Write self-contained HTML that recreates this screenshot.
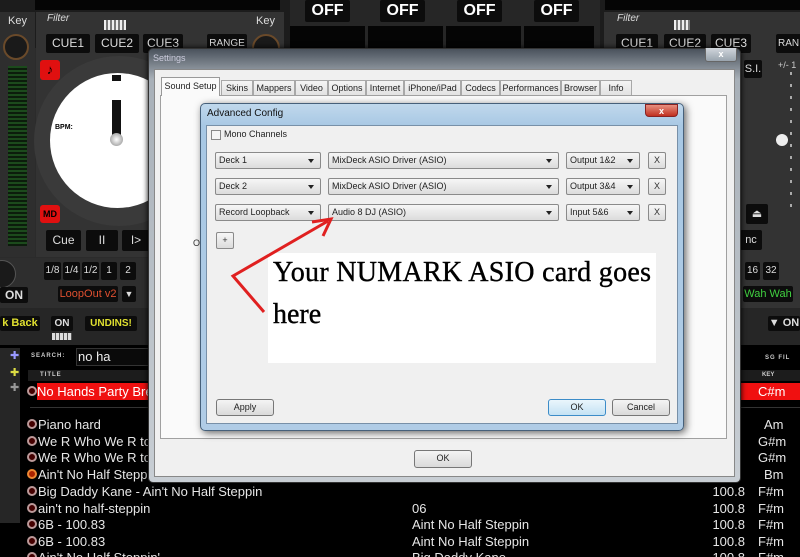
<!DOCTYPE html>
<html><head><meta charset="utf-8"><style>
*{margin:0;padding:0;box-sizing:border-box}
html,body{width:800px;height:557px;overflow:hidden}
body{background:#2b2b2b;font-family:"Liberation Sans",Arial,sans-serif;position:relative}
.a{position:absolute}
.btn{position:absolute;background:#0c0c0c;color:#ddd;font-size:11px;text-align:center;border-radius:2px}
.w{color:#fff}
.row{position:absolute;left:0;width:800px;height:17px;color:#e6e6e6;font-size:13px;line-height:17px}
.row .ic{position:absolute;left:27px;top:3px;width:10px;height:10px;border-radius:50%;border:2px solid #b99;background:#400}
.row .t{position:absolute;left:38px}
.row .al{position:absolute;left:412px}
.row .b{position:absolute;right:55px}
.row .k{position:absolute;left:758px}
.cb{position:absolute;height:17px;border:1px solid #8a8a8a;border-radius:2px;background:linear-gradient(#f6f6f6,#dcdcdc);font-size:9px;line-height:15px;padding-left:3px;color:#222}
.cb:after{content:"";position:absolute;right:6px;top:6px;border:3px solid transparent;border-top:4px solid #222}
.xb{position:absolute;width:18px;height:17px;border:1px solid #8a8a8a;border-radius:2px;background:linear-gradient(#f6f6f6,#dcdcdc);font-size:9px;text-align:center;line-height:15px;color:#333}
.pb{position:absolute;height:17px;border:1px solid #777;border-radius:3px;background:linear-gradient(#f4f4f4,#dadada);font-size:9px;text-align:center;line-height:15px;color:#222}
.tab{position:absolute;top:80px;height:15px;border:1px solid #a8a8a8;border-bottom:none;background:linear-gradient(#f4f4f4,#e2e2e2);font-size:9px;line-height:14px;text-align:center;color:#222}
</style></head><body>
<div class="a" style="left:0;top:0;width:800px;height:48px;background:#1c1c1c"></div>
<div class="a" style="left:290px;top:0;width:310px;height:48px;background:#262626"></div>
<div class="btn w" style="left:305px;top:0;width:45px;height:22px;font-size:16px;font-weight:bold;line-height:22px">OFF</div>
<div class="btn w" style="left:380px;top:0;width:45px;height:22px;font-size:16px;font-weight:bold;line-height:22px">OFF</div>
<div class="btn w" style="left:457px;top:0;width:45px;height:22px;font-size:16px;font-weight:bold;line-height:22px">OFF</div>
<div class="btn w" style="left:534px;top:0;width:45px;height:22px;font-size:16px;font-weight:bold;line-height:22px">OFF</div>
<div class="a" style="left:290px;top:26px;width:75px;height:22px;background:#050505"></div>
<div class="a" style="left:368px;top:26px;width:75px;height:22px;background:#050505"></div>
<div class="a" style="left:446px;top:26px;width:75px;height:22px;background:#050505"></div>
<div class="a" style="left:524px;top:26px;width:70px;height:22px;background:#050505"></div>
<div class="a" style="left:35px;top:0;width:245px;height:10px;background:#050505"></div>
<div class="a" style="left:605px;top:0;width:195px;height:10px;background:#050505"></div>
<div class="a" style="left:0;top:12px;width:35px;height:245px;background:#2e2e2e"></div>
<div class="a" style="left:8px;top:15px;color:#ddd;font-size:11px">Key</div>
<div class="a" style="left:3px;top:34px;width:26px;height:26px;border-radius:50%;background:#1a1a1a;border:2px solid #6a4a2a"></div>
<div class="a" style="left:8px;top:66px;width:19px;height:180px;background:repeating-linear-gradient(#1c4a1c 0 2px,#0c1c0c 2px 4px)"></div>
<div class="a" style="left:36px;top:12px;width:248px;height:245px;background:#333"></div>
<div class="a" style="left:47px;top:13px;color:#ddd;font-size:10px;font-style:italic">Filter</div>
<div class="a" style="left:104px;top:20px;width:22px;height:10px;background:repeating-linear-gradient(90deg,#eee 0 2px,#777 2px 4px)"></div>
<div class="btn" style="left:46px;top:34px;width:44px;height:19px;font-size:12px;line-height:19px">CUE1</div>
<div class="btn" style="left:95px;top:34px;width:44px;height:19px;font-size:12px;line-height:19px">CUE2</div>
<div class="btn" style="left:143px;top:34px;width:40px;height:19px;font-size:12px;line-height:19px">CUE3</div>
<div class="btn" style="left:207px;top:34px;width:40px;height:19px;font-size:10px;line-height:19px">RANGE</div>
<div class="a" style="left:256px;top:15px;color:#ddd;font-size:11px">Key</div>
<div class="a" style="left:252px;top:34px;width:28px;height:28px;border-radius:50%;background:#1a1a1a;border:2px solid #6a4a2a"></div>
<div class="a" style="left:34px;top:56px;width:170px;height:170px;border-radius:50%;background:#3a3a3a"></div>
<div class="a" style="left:50px;top:73px;width:135px;height:135px;border-radius:50%;background:#fff"></div>
<div class="a" style="left:40px;top:60px;width:20px;height:20px;background:#e01010;border-radius:3px;color:#000;font-size:13px;text-align:center;line-height:20px">♪</div>
<div class="a" style="left:40px;top:205px;width:20px;height:18px;background:#e01010;border-radius:3px;color:#000;font-size:9px;font-weight:bold;text-align:center;line-height:18px">MD</div>
<div class="a" style="left:112px;top:75px;width:9px;height:6px;background:#111"></div>
<div class="a" style="left:112px;top:100px;width:9px;height:38px;background:#111"></div>
<div class="a" style="left:110px;top:133px;width:13px;height:13px;border-radius:50%;background:radial-gradient(#fff,#888)"></div>
<div class="a" style="left:55px;top:124px;font-size:7px;font-weight:bold">BPM:</div>
<div class="btn" style="left:46px;top:230px;width:35px;height:21px;font-size:12px;line-height:21px">Cue</div>
<div class="btn" style="left:86px;top:230px;width:32px;height:21px;font-size:12px;line-height:21px">II</div>
<div class="btn" style="left:122px;top:230px;width:28px;height:21px;font-size:12px;line-height:21px">I&gt;</div>
<div class="a" style="left:0;top:258px;width:148px;height:50px;background:#2e2e2e"></div>
<div class="a" style="left:-12px;top:260px;width:28px;height:28px;border-radius:50%;background:#1a1a1a;border:1px solid #555"></div>
<div class="btn" style="left:0;top:287px;width:28px;height:16px;font-size:12px;font-weight:bold;line-height:16px">ON</div>
<div class="btn" style="left:44px;top:262px;width:17px;height:18px;font-size:10px;line-height:18px">1/8</div>
<div class="btn" style="left:63px;top:262px;width:17px;height:18px;font-size:10px;line-height:18px">1/4</div>
<div class="btn" style="left:82px;top:262px;width:17px;height:18px;font-size:10px;line-height:18px">1/2</div>
<div class="btn" style="left:101px;top:262px;width:16px;height:18px;font-size:10px;line-height:18px">1</div>
<div class="btn" style="left:120px;top:262px;width:16px;height:18px;font-size:10px;line-height:18px">2</div>
<div class="btn" style="left:58px;top:286px;width:60px;height:16px;color:#e05030;font-size:11px;line-height:16px">LoopOut v2</div>
<div class="btn" style="left:122px;top:286px;width:14px;height:16px;font-size:9px;line-height:16px">▼</div>
<div class="a" style="left:0;top:308px;width:148px;height:37px;background:#262626"></div>
<div class="btn" style="left:0;top:316px;width:40px;height:15px;color:#e0e030;font-size:11px;font-weight:bold;line-height:15px">k Back</div>
<div class="btn" style="left:51px;top:316px;width:22px;height:15px;font-size:10px;font-weight:bold;line-height:15px">ON</div>
<div class="btn" style="left:85px;top:316px;width:52px;height:15px;color:#e0e030;font-size:10px;font-weight:bold;line-height:15px">UNDINS!</div>
<div class="a" style="left:52px;top:333px;width:20px;height:7px;background:repeating-linear-gradient(90deg,#ddd 0 3px,#555 3px 4px)"></div>
<div class="a" style="left:604px;top:12px;width:196px;height:296px;background:#333"></div>
<div class="a" style="left:617px;top:13px;color:#ddd;font-size:10px;font-style:italic">Filter</div>
<div class="a" style="left:674px;top:20px;width:16px;height:10px;background:repeating-linear-gradient(90deg,#eee 0 2px,#777 2px 4px)"></div>
<div class="btn" style="left:616px;top:34px;width:42px;height:19px;font-size:12px;line-height:19px">CUE1</div>
<div class="btn" style="left:664px;top:34px;width:42px;height:19px;font-size:12px;line-height:19px">CUE2</div>
<div class="btn" style="left:711px;top:34px;width:40px;height:19px;font-size:12px;line-height:19px">CUE3</div>
<div class="btn" style="left:776px;top:34px;width:30px;height:19px;font-size:10px;line-height:19px;text-align:left;padding-left:2px">RAN</div>
<div class="btn" style="left:744px;top:60px;width:18px;height:18px;font-size:11px;line-height:18px">S.I.</div>
<div class="a" style="left:778px;top:60px;color:#ccc;font-size:9px">+/- 1</div>
<div class="a" style="left:790px;top:72px;width:2px;height:140px;background:repeating-linear-gradient(#aaa 0 3px,#333 3px 12px)"></div>
<div class="a" style="left:776px;top:134px;width:12px;height:12px;border-radius:50%;background:#eee"></div>
<div class="btn" style="left:746px;top:204px;width:22px;height:20px;font-size:11px;line-height:20px">⏏</div>
<div class="btn" style="left:740px;top:230px;width:22px;height:20px;font-size:11px;line-height:20px">nc</div>
<div class="btn" style="left:745px;top:262px;width:15px;height:18px;font-size:10px;line-height:18px">16</div>
<div class="btn" style="left:763px;top:262px;width:16px;height:18px;font-size:10px;line-height:18px">32</div>
<div class="btn" style="left:743px;top:286px;width:50px;height:16px;color:#40d040;font-size:11px;line-height:16px">Wah Wah</div>
<div class="a" style="left:604px;top:308px;width:196px;height:37px;background:#262626"></div>
<div class="btn" style="left:768px;top:316px;width:32px;height:15px;font-size:11px;font-weight:bold;line-height:15px">▼ ON</div>
<div class="a" style="left:0;top:345px;width:800px;height:212px;background:#000"></div>
<div class="a" style="left:0;top:348px;width:20px;height:175px;background:#262626"></div>
<div class="a" style="left:10px;top:349px;color:#99f;font-size:11px">✚</div>
<div class="a" style="left:10px;top:366px;color:#dd4;font-size:11px">✚</div>
<div class="a" style="left:10px;top:381px;color:#999;font-size:11px">✚</div>
<div class="a" style="left:31px;top:353px;color:#ccc;font-size:6px;letter-spacing:1px;font-weight:bold">SEARCH:</div>
<div class="a" style="left:76px;top:348px;width:80px;height:18px;background:#0a0a0a;border:1px solid #333;color:#eee;font-size:13px;line-height:16px;padding-left:1px">no ha</div>
<div class="a" style="left:28px;top:370px;width:772px;height:11px;background:#1c1c1c"></div>
<div class="a" style="left:40px;top:372px;color:#ccc;font-size:6px;letter-spacing:1px;font-weight:bold">TITLE</div>
<div class="a" style="left:765px;top:355px;color:#ccc;font-size:6px;letter-spacing:1px;font-weight:bold">SG FIL</div>
<div class="a" style="left:762px;top:372px;color:#ccc;font-size:6px;font-weight:bold">KEY</div>
<div class="row" style="top:383px"><span class="ic"></span><span class="t" style="background:#f01010;color:#fff;left:37px;width:120px">No Hands Party Bre</span><span class="a" style="left:740px;width:60px;height:17px;background:#f01010"></span><span class="k" style="color:#fff">C#m</span></div>
<div class="a" style="left:30px;top:407px;width:770px;height:1px;background:#333"></div>
<div class="row" style="top:416px"><span class="ic"></span><span class="t">Piano hard</span><span class="k" style="left:764px">Am</span></div>
<div class="row" style="top:433px"><span class="ic"></span><span class="t">We R Who We R to</span><span class="k">G#m</span></div>
<div class="row" style="top:449px"><span class="ic"></span><span class="t">We R Who We R to</span><span class="k">G#m</span></div>
<div class="row" style="top:466px"><span class="ic" style="border-color:#e83;background:#a20"></span><span class="t">Ain't No Half Steppi</span><span class="k" style="left:764px">Bm</span></div>
<div class="row" style="top:483px"><span class="ic"></span><span class="t">Big Daddy Kane - Ain't No Half Steppin</span><span class="b">100.8</span><span class="k">F#m</span></div>
<div class="row" style="top:500px"><span class="ic"></span><span class="t">ain't no half-steppin</span><span class="al">06</span><span class="b">100.8</span><span class="k">F#m</span></div>
<div class="row" style="top:516px"><span class="ic"></span><span class="t">6B - 100.83</span><span class="al">Aint No Half Steppin</span><span class="b">100.8</span><span class="k">F#m</span></div>
<div class="row" style="top:533px"><span class="ic"></span><span class="t">6B - 100.83</span><span class="al">Aint No Half Steppin</span><span class="b">100.8</span><span class="k">F#m</span></div>
<div class="row" style="top:549px"><span class="ic"></span><span class="t">Ain't No Half Steppin'</span><span class="al">Big Daddy Kane</span><span class="b">100.8</span><span class="k">F#m</span></div>
<div class="a" style="left:148px;top:48px;width:593px;height:435px;background:linear-gradient(#4a525c,#a8b0b8 30px,#c8ced4);border:1px solid #333;border-radius:5px;box-shadow:0 0 6px #000"></div>
<div class="a" style="left:153px;top:53px;color:#ccd;font-size:9px">Settings</div>
<div class="a" style="left:705px;top:48px;width:32px;height:14px;border:1px solid #666;border-top:none;border-radius:0 0 3px 3px;background:linear-gradient(#d0d6dc,#9aa4ae);color:#fff;font-size:9px;text-align:center;line-height:13px;font-weight:bold">x</div>
<div class="a" style="left:154px;top:69px;width:581px;height:408px;background:#f0f0f0;border:1px solid #888"></div>
<div class="a" style="left:160px;top:95px;width:567px;height:344px;background:#fafafa;border:1px solid #a0a0a0"></div>
<div class="tab" style="left:161px;top:77px;width:59px;height:19px;background:#fafafa;border-color:#999;line-height:17px">Sound Setup</div>
<div class="tab" style="left:221px;width:32px">Skins</div>
<div class="tab" style="left:253px;width:42px">Mappers</div>
<div class="tab" style="left:295px;width:33px">Video</div>
<div class="tab" style="left:328px;width:38px">Options</div>
<div class="tab" style="left:366px;width:38px">Internet</div>
<div class="tab" style="left:404px;width:57px">iPhone/iPad</div>
<div class="tab" style="left:461px;width:39px">Codecs</div>
<div class="tab" style="left:500px;width:61px">Performances</div>
<div class="tab" style="left:561px;width:39px">Browser</div>
<div class="tab" style="left:600px;width:32px">Info</div>
<div class="a" style="left:193px;top:238px;font-size:9px;color:#333">O</div>
<div class="pb" style="left:414px;top:450px;width:58px;height:18px">OK</div>
<div class="a" style="left:200px;top:103px;width:484px;height:328px;background:linear-gradient(#c0d8ec,#a8c8e4 22px,#b0cce6);border:1px solid #46607a;border-radius:5px;box-shadow:2px 2px 8px rgba(0,0,0,.6)"></div>
<div class="a" style="left:207px;top:108px;font-size:10px;color:#111">Advanced Config</div>
<div class="a" style="left:645px;top:104px;width:33px;height:13px;border:1px solid #822;border-radius:0 0 4px 4px;background:linear-gradient(#e89080,#c03020);color:#fff;font-size:9px;font-weight:bold;text-align:center;line-height:12px">x</div>
<div class="a" style="left:206px;top:125px;width:472px;height:299px;background:#f0f0f0;border:1px solid #7890a8"></div>
<div class="a" style="left:211px;top:130px;width:10px;height:10px;border:1px solid #888;background:#f4f4f4"></div>
<div class="a" style="left:224px;top:129px;font-size:9px;color:#222">Mono Channels</div>
<div class="cb" style="left:215px;top:152px;width:106px">Deck 1</div>
<div class="cb" style="left:328px;top:152px;width:231px">MixDeck ASIO Driver (ASIO)</div>
<div class="cb" style="left:566px;top:152px;width:74px">Output 1&amp;2</div>
<div class="xb" style="left:648px;top:152px">X</div>
<div class="cb" style="left:215px;top:178px;width:106px">Deck 2</div>
<div class="cb" style="left:328px;top:178px;width:231px">MixDeck ASIO Driver (ASIO)</div>
<div class="cb" style="left:566px;top:178px;width:74px">Output 3&amp;4</div>
<div class="xb" style="left:648px;top:178px">X</div>
<div class="cb" style="left:215px;top:204px;width:106px">Record Loopback</div>
<div class="cb" style="left:328px;top:204px;width:231px">Audio 8 DJ (ASIO)</div>
<div class="cb" style="left:566px;top:204px;width:74px">Input 5&amp;6</div>
<div class="xb" style="left:648px;top:204px">X</div>
<div class="xb" style="left:216px;top:232px">+</div>
<div class="a" style="left:268px;top:253px;width:388px;height:110px;background:#fff"></div>
<div class="a" style="left:273px;top:257px;font-family:'Liberation Serif',serif;font-size:28px;color:#000;white-space:nowrap;letter-spacing:0.3px;-webkit-text-stroke:0.4px #000">Your NUMARK ASIO card goes</div>
<div class="a" style="left:273px;top:299px;font-family:'Liberation Serif',serif;font-size:28px;color:#000;-webkit-text-stroke:0.4px #000">here</div>
<svg class="a" style="left:0;top:0" width="800" height="557"><path d="M264 312 L233 276 L328 221" stroke="#e02020" stroke-width="3" fill="none"/><path d="M312 222 L331 219 L323 236" stroke="#e02020" stroke-width="3" fill="none"/></svg>
<div class="pb" style="left:216px;top:399px;width:58px">Apply</div>
<div class="pb" style="left:548px;top:399px;width:58px;border-color:#3c8cc8;background:linear-gradient(#eaf6fc,#c4e2f4)">OK</div>
<div class="pb" style="left:612px;top:399px;width:58px">Cancel</div>
</body></html>
